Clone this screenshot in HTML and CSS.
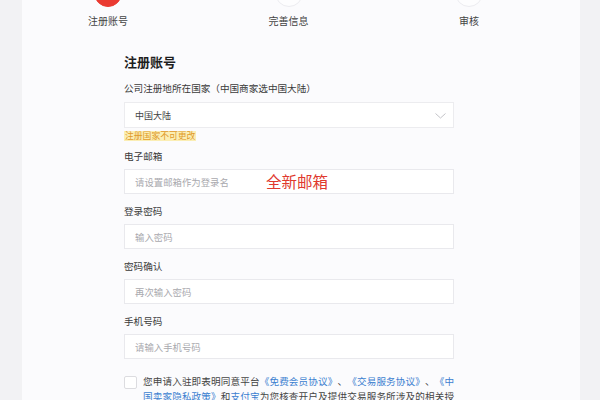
FILE: index.html
```html
<!DOCTYPE html>
<html lang="zh-CN">
<head>
<meta charset="utf-8">
<title>注册账号</title>
<link rel="stylesheet" href="styles.css">
</head>
<body>
<div class="card">
  <div class="steps">
    <div class="step active"><span class="dot"></span><span class="step-label">注册账号</span></div>
    <div class="step"><span class="dot"></span><span class="step-label">完善信息</span></div>
    <div class="step"><span class="dot"></span><span class="step-label">审核</span></div>
  </div>
  <form class="form">
    <h2 class="title">注册账号</h2>
    <label class="label first">公司注册地所在国家（中国商家选中国大陆）</label>
    <div class="select">
      <span>中国大陆</span>
      <svg class="chev" width="11" height="6" viewBox="0 0 11 6"><path d="M0.5 0.5 L5.5 5 L10.5 0.5" fill="none" stroke="#c4c4c8" stroke-width="1"/></svg>
    </div>
    <div class="warn"><span>注册国家不可更改</span></div>
    <label class="label">电子邮箱</label>
    <div class="field">
      <input class="input" type="text" placeholder="请设置邮箱作为登录名">
      <span class="note">全新邮箱</span>
    </div>
    <label class="label">登录密码</label>
    <div class="field"><input class="input" type="password" placeholder="输入密码"></div>
    <label class="label">密码确认</label>
    <div class="field"><input class="input" type="password" placeholder="再次输入密码"></div>
    <label class="label">手机号码</label>
    <div class="field"><input class="input" type="text" placeholder="请输入手机号码"></div>
    <div class="agree">
      <span class="box"></span>
      <p class="agree-text">您申请入驻即表明同意平台<a class="link">《免费会员协议》</a>、<a class="link">《交易服务协议》</a>、<a class="link">《中国卖家隐私政策》</a>和<a class="link">支付宝</a>为您核查开户及提供交易服务所涉及的相关授权，并同意平台依据相关规则对您的入驻信息进行审核。</p>
    </div>
  </form>
</div>
</body>
</html>
```

FILE: styles.css
```css
* { box-sizing: border-box; }
html, body { margin: 0; padding: 0; }
body {
  background: #f2f2f4;
  font-family: "Noto Sans CJK SC", "Noto Sans", sans-serif;
  color: #333;
  height: 400px;
  overflow: hidden;
  text-spacing-trim: space-all;
}
.card {
  margin-left: 22px;
  width: 558px;
  height: 400px;
  background: #fbfbfd;
  overflow: hidden;
}
.steps {
  display: flex;
  justify-content: space-between;
  padding: 0 86px 0 61px;
}
.step {
  width: 50px;
  display: flex;
  flex-direction: column;
  align-items: center;
}
.dot {
  width: 28px;
  height: 28px;
  margin-top: -21px;
  border-radius: 50%;
  background: #fdfdfe;
  border: 1px solid #ececf0;
}
.step.active .dot {
  background: #ea3a31;
  border-color: #ea3a31;
}
.step-label {
  margin-top: 7px;
  font-size: 10px;
  line-height: 14px;
  color: #444;
  white-space: nowrap;
}
.form {
  margin: 0 0 0 102px;
  width: 330px;
  display: flex;
  flex-direction: column;
}
.title {
  margin: 26px 0 0;
  font-size: 13px;
  line-height: 16px;
  font-weight: 700;
  color: #1e1e1e;
}
.label {
  display: block;
  margin-top: 10px;
  font-size: 9.6px;
  line-height: 14px;
  color: #3a3a3a;
}
.label.first { margin-top: 11px; }
.select {
  margin-top: 7px;
  height: 26px;
  border: 1px solid #ececef;
  background: #fff;
  display: flex;
  align-items: center;
  justify-content: space-between;
  padding: 0 7px 0 10px;
  font-size: 9px;
  color: #444;
}
.chev { margin-top: 1px; }
.warn {
  margin-top: 3px;
  height: 10px;
  display: flex;
}
.warn span {
  font-size: 8.8px;
  line-height: 10px;
  color: #e09a2a;
  background: #fbeeb4;
  padding: 0 1px;
}
.warn + .label { margin-top: 8px; }
.field {
  position: relative;
  margin-top: 6px;
}
.input {
  display: block;
  width: 100%;
  height: 25px;
  border: 1px solid #e9e9ed;
  background: #fff;
  padding: 0 10px;
  font-family: inherit;
  font-size: 9.4px;
  color: #333;
  outline: none;
}
.input::placeholder { color: #a9a9ae; }
.note {
  position: absolute;
  left: 142px;
  top: 2px;
  font-size: 15.5px;
  line-height: 20px;
  color: #e0392e;
}
.agree {
  margin-top: 15px;
  display: flex;
  align-items: flex-start;
}
.box {
  flex: none;
  width: 13px;
  height: 13px;
  margin-top: 2px;
  border: 1px solid #dcdce0;
  border-radius: 2px;
  background: #fff;
}
.agree-text {
  margin: 0 0 0 6px;
  width: 311px;
  font-size: 9.6px;
  line-height: 15px;
  color: #444;
  text-align: justify;
  text-spacing-trim: space-all;
}
.link { color: #3b7fd0; }
```
